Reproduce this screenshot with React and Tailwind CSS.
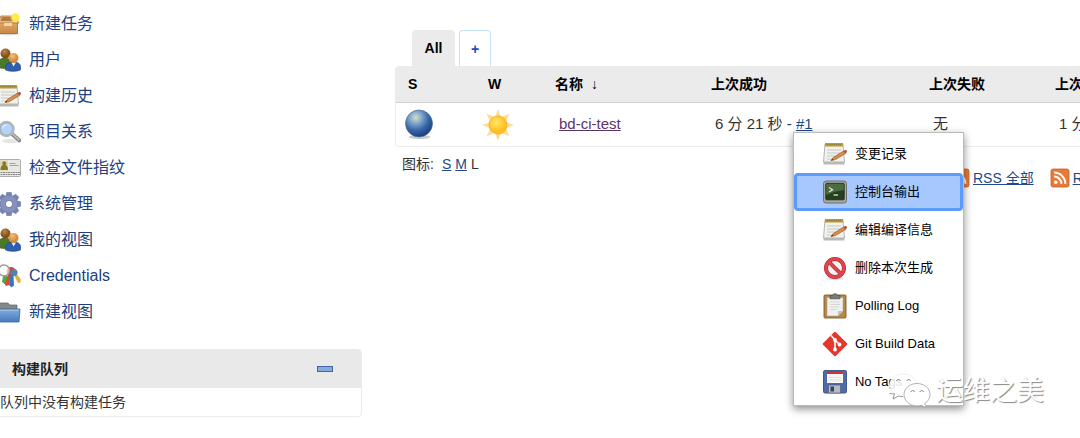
import React from "react";

const PackageIcon = () => (
  <svg viewBox="0 0 24 24" className="h-6 w-6 shrink-0">
    <defs>
      <linearGradient id="box" x1="0" y1="0" x2="0" y2="1">
        <stop offset="0" stopColor="#e0a866" />
        <stop offset="1" stopColor="#c88743" />
      </linearGradient>
      <radialGradient id="spark">
        <stop offset="0" stopColor="#fff04a" />
        <stop offset="0.6" stopColor="#fde94d" />
        <stop offset="1" stopColor="#fff6a8" stopOpacity="0" />
      </radialGradient>
    </defs>
    <ellipse cx="11" cy="22" rx="11" ry="1.500" fill="#000" opacity="0.15" />
    <path d="M1.500 10.500h19v11h-19z" fill="url(#box)" stroke="#a0682f" strokeWidth="0.8" />
    <path d="M4 4h14.500l3.500 7H.500z" fill="#e9bb80" stroke="#a8713a" strokeWidth="0.8" />
    <path d="M5 5h12.500l2 4H3.500z" fill="#b57a40" />
    <path d="M7 11h8v3H7z" fill="#f1d5aa" />
    <circle cx="18.500" cy="5.500" r="5.500" fill="url(#spark)" />
  </svg>
);

const PeopleIcon = () => (
  <svg viewBox="0 0 24 24" className="h-6 w-6 shrink-0">
    <defs>
      <radialGradient id="headBack" cx="0.4" cy="0.3">
        <stop offset="0" stopColor="#c08648" />
        <stop offset="1" stopColor="#85501f" />
      </radialGradient>
      <radialGradient id="headFront" cx="0.4" cy="0.3">
        <stop offset="0" stopColor="#f6bf7c" />
        <stop offset="1" stopColor="#d98a35" />
      </radialGradient>
    </defs>
    <path d="M0 19c0-6 3-9 8-9s7 3 7 9c-4 2-11 2-15 0z" fill="#4a7a26" stroke="#35591a" strokeWidth="0.6" />
    <circle cx="8.500" cy="5.500" r="5" fill="url(#headBack)" />
    <path d="M8.500 22c-1-5 2-8 8-8s8 3 7 8c-4 1.800-11 1.800-15 0z" fill="#2f5fae" stroke="#1f4485" strokeWidth="0.6" />
    <path d="M14.500 14.500l2 4 2.500-4z" fill="#e6eefb" />
    <circle cx="16.500" cy="10" r="5" fill="url(#headFront)" />
  </svg>
);

const NotepadIcon = () => (
  <svg viewBox="0 0 24 24" className="h-6 w-6 shrink-0">
    <path d="M2 2h18l1.500 18H.5z" fill="#f1f1ee" stroke="#a5a59f" strokeWidth="0.8" />
    <path d="M.5 20h21v2.500H.5z" fill="#b9b9b3" />
    <path d="M2 1h18v3.500H2z" fill="#b29a3e" />
    <path d="M4 2.500h14" stroke="#84702a" strokeWidth="0.8" strokeDasharray="1.200 1" />
    <path d="M4 8h14M4 11h13M4 14h8M4 17h6" stroke="#c4c4c0" strokeWidth="0.9" />
    <path d="M8 18.500l2.500-3.200 10-6.300 2 2.600-10.500 6.200z" fill="#d98b4a" stroke="#925523" strokeWidth="0.6" />
    <path d="M20.500 9l1.500-1c1.500-.4 2.600 1.300 1.500 2.500l-1 1.100z" fill="#c4453c" />
    <path d="M8 18.500l1.300-1.700 1 1.300z" fill="#333" />
  </svg>
);

const SearchIcon = () => (
  <svg viewBox="0 0 24 24" className="h-6 w-6 shrink-0">
    <ellipse cx="14" cy="21" rx="9" ry="2" fill="#000" opacity="0.1" />
    <path d="M15 14l7.500 6.500" stroke="#8b8d8b" strokeWidth="3.800" strokeLinecap="round" />
    <path d="M16 14.500l6 5.200" stroke="#c6c8c6" strokeWidth="1.200" strokeLinecap="round" />
    <circle cx="9.500" cy="9" r="7.200" fill="#b5d3f5" stroke="#b8bab6" strokeWidth="2.200" />
    <circle cx="9.500" cy="9" r="6" fill="none" stroke="#7c9fce" strokeWidth="0.6" />
    <path d="M5 8.500c0-3 3-4.500 6-4-2 1-4.500 2-6 4z" fill="#e9f3ff" />
  </svg>
);

const FingerprintIcon = () => (
  <svg viewBox="0 0 24 24" className="h-6 w-6 shrink-0">
    <rect x="0.5" y="3.500" width="23" height="17" rx="1" fill="#e7e7e4" stroke="#a7a7a2" strokeWidth="0.9" />
    <path d="M1 4.500h10v10H1z" fill="#d9d6bd" />
    <path d="M3.500 14c0-3 1-4.500 2.500-5a2 2 0 1 1 2.500 0c1.500.6 2.500 2 2.500 5z" fill="#8b7a1d" />
    <path d="M12.500 7.500h6M12.500 9.500h9" stroke="#a2a29f" strokeWidth="1" />
    <path d="M1 16.500h22M1 18.500h22" stroke="#8a8a86" strokeWidth="1" strokeDasharray="2 0.5" />
  </svg>
);

const GearIcon = () => (
  <svg viewBox="0 0 24 24" className="h-6 w-6 shrink-0">
    <g fill="#7784b3" stroke="#68749f" strokeWidth="0.5">
      {[0, 45, 90, 135].map((angle) => (
        <path key={angle} d="M9.800 0.300h4.400l1 4v15.400l-1 4H9.800l-1-4V4.300z" transform={`rotate(${angle} 12 12)`} />
      ))}
    </g>
    <circle cx="12" cy="12" r="8.300" fill="#8691bd" />
    <circle cx="12" cy="12" r="3.600" fill="#fff" stroke="#616d9a" strokeWidth="0.8" />
  </svg>
);

const KeysIcon = () => (
  <svg viewBox="0 0 24 24" className="h-6 w-6 shrink-0">
    <path d="M12 9l-5 10 2 3 3-1 2-11z" fill="#d64b3a" />
    <path d="M6 12l-1 6 3 2 3-8z" fill="#58a53c" />
    <path d="M13 9l-1 12 2.500 2.500 2.500-2-.5-11z" fill="#3c78b8" />
    <path d="M16 9l5 10 2.500-.5.300-3-5-7z" fill="#e0b13e" />
    <circle cx="14" cy="7.500" r="4.500" fill="#cc4539" />
    <circle cx="17" cy="8.500" r="3.500" fill="#4d84b5" />
    <circle cx="7" cy="6.500" r="5.500" fill="#fff" fillOpacity="0.7" stroke="#9c9e9c" strokeWidth="1.500" />
  </svg>
);

const FolderIcon = () => (
  <svg viewBox="0 0 24 24" className="h-6 w-6 shrink-0">
    <defs>
      <linearGradient id="folder" x1="0" y1="0" x2="0" y2="1">
        <stop offset="0" stopColor="#82abdc" />
        <stop offset="1" stopColor="#477cbf" />
      </linearGradient>
    </defs>
    <path d="M1 3h10l1.500 2H20v8H1z" fill="#84888a" stroke="#5d6162" strokeWidth="0.7" />
    <path d="M0 9h23l-1 13H0z" fill="url(#folder)" stroke="#34639f" strokeWidth="0.8" />
    <path d="M1 10.200h20.500" stroke="#b3cff0" strokeWidth="0.8" />
  </svg>
);

const BallIcon = () => (
  <svg viewBox="0 0 32 32" className="h-8 w-8">
    <defs>
      <radialGradient id="ball" cx="0.38" cy="0.28" r="0.72">
        <stop offset="0" stopColor="#d2dfcd" />
        <stop offset="0.3" stopColor="#85a9cb" />
        <stop offset="0.65" stopColor="#3868a9" />
        <stop offset="1" stopColor="#1d3e79" />
      </radialGradient>
    </defs>
    <ellipse cx="15.500" cy="28" rx="11" ry="2" fill="#000" opacity="0.2" />
    <circle cx="15" cy="14.500" r="13.500" fill="url(#ball)" stroke="#49709f" strokeWidth="0.7" />
  </svg>
);

const SunIcon = () => (
  <svg viewBox="0 0 32 32" className="h-8 w-8">
    <defs>
      <radialGradient id="sun" cx="0.4" cy="0.35">
        <stop offset="0" stopColor="#ffe96b" />
        <stop offset="1" stopColor="#ffc022" />
      </radialGradient>
    </defs>
    <path
      d="M16 0l3 8.300 8.300-3.600-3.600 8.300L32 16l-8.300 3 3.600 8.300-8.300-3.600L16 32l-3-8.300-8.300 3.600 3.600-8.300L0 16l8.300-3-3.600-8.300 8.300 3.600z"
      fill="#ffdc91"
    />
    <circle cx="16" cy="16" r="9" fill="url(#sun)" stroke="#f6ae2d" strokeWidth="0.9" />
  </svg>
);

const RssIcon = () => (
  <svg viewBox="0 0 20 20" className="h-5 w-5 shrink-0">
    <rect x="1" y="1" width="18" height="18" rx="2" fill="#e77a37" stroke="#c9602a" strokeWidth="0.8" />
    <circle cx="5.800" cy="14.300" r="1.800" fill="#fff" />
    <path d="M4.200 8.600a7.200 7.200 0 0 1 7.200 7.200M4.200 4.600a11.200 11.200 0 0 1 11.200 11.200" fill="none" stroke="#fff" strokeWidth="2" />
  </svg>
);

const TerminalIcon = () => (
  <svg viewBox="0 0 24 24" className="h-6 w-6 shrink-0">
    <rect x="0.5" y="1" width="23" height="22" rx="2.500" fill="#a6a9a2" stroke="#6f716c" />
    <rect x="2.800" y="3.300" width="18.400" height="16.500" rx="0.800" fill="#26401f" stroke="#172614" strokeWidth="0.8" />
    <path d="M3.200 3.700h17.600v6.500c-6 .5-12 2-17.600 4.800z" fill="#4d6b41" />
    <path d="M6 7.500l3.500 2.200L6 12" fill="none" stroke="#d7e8cf" strokeWidth="1.300" />
    <path d="M10.500 15h4.500" stroke="#d7e8cf" strokeWidth="1.300" />
  </svg>
);

const StopIcon = () => (
  <svg viewBox="0 0 24 24" className="h-6 w-6 shrink-0">
    <ellipse cx="12" cy="22.500" rx="9" ry="1.500" fill="#000" opacity="0.12" />
    <circle cx="12" cy="12" r="9" fill="#f7f1f1" stroke="#b32730" strokeWidth="4" />
    <path d="M5.800 5.800l12.400 12.400" stroke="#b32730" strokeWidth="3.800" />
    <circle cx="12" cy="12" r="9" fill="none" stroke="#db454d" strokeWidth="3" />
    <path d="M5.800 5.800l12.400 12.400" stroke="#db454d" strokeWidth="2.800" />
  </svg>
);

const ClipboardIcon = () => (
  <svg viewBox="0 0 24 26" className="h-[26px] w-6 shrink-0">
    <rect x="1" y="2" width="22" height="23" rx="1" fill="#b98748" stroke="#80592a" strokeWidth="0.9" />
    <path d="M4 4.500h16v13.500l-5 5H4z" fill="#f0f0ee" stroke="#a2a29d" strokeWidth="0.6" />
    <path d="M15 23v-5h5z" fill="#c3c3bf" />
    <path d="M7 9h10M7 11.500h10M7 14h9M7 16.500h7" stroke="#d6d6d2" strokeWidth="0.9" />
    <path d="M7 2.500h2.500C10 .3 14 .3 14.500 2.500H17v3.300H7z" fill="#777b77" stroke="#4c4f4c" strokeWidth="0.7" />
  </svg>
);

const GitIcon = () => (
  <svg viewBox="0 0 26 26" className="-mx-px h-[26px] w-[26px] shrink-0">
    <rect x="4" y="4" width="18" height="18" rx="1" transform="rotate(45 13 13)" fill="#e5382d" />
    <path d="M9 4.500l4 4.500v9.500M13 9l4.500 4.500" fill="none" stroke="#fff" strokeWidth="1.600" />
    <circle cx="13" cy="9" r="1.900" fill="#fff" />
    <circle cx="17.500" cy="13.500" r="1.900" fill="#fff" />
    <circle cx="13" cy="18.500" r="1.900" fill="#fff" />
  </svg>
);

const FloppyIcon = () => (
  <svg viewBox="0 0 24 24" className="h-6 w-6 shrink-0">
    <rect x="0.500" y="0.500" width="23" height="22.500" rx="1.500" fill="#4f6ca8" stroke="#41598c" />
    <path d="M4 1h16v12H4z" fill="#f6f6f6" />
    <path d="M4 1h16v3H4z" fill="#cf3335" />
    <path d="M6 7.500h12M6 10h12" stroke="#dcdcdc" strokeWidth="0.8" />
    <path d="M5.500 15h12v8h-12z" fill="#b6bac1" stroke="#4b5873" strokeWidth="0.6" />
    <path d="M7.500 16.500H11v5H7.500z" fill="#35466b" />
  </svg>
);

const ChatLogo = () => (
  <svg viewBox="0 0 44 38" className="h-[38px] w-11 shrink-0">
    <path
      d="M15 2C7 2 1.500 7 1.500 13c0 3.700 2 6.500 5 8.600L5 27l5.500-3c1.500.4 3 .6 4.500.6h14V13C29 7 23 2 15 2z"
      fill="#fff"
      fillOpacity="0.88"
      stroke="#dedede"
      strokeWidth="0.5"
    />
    <path d="M1.500 21.500c2 0 4 .6 5 .1L5 27l5.500-3c1.500.4 3 .6 4.500.6" fill="none" stroke="#909090" strokeWidth="0.9" />
    <path
      d="M29 11.500c-7 0-13 4.700-13 11s6 11.500 13 11.500c1.700 0 3-.3 4.500-.7l4.500 2.500-1.200-4.200c3.200-2.200 5.200-5.300 5.200-9.100 0-6.300-6-11-13-11z"
      fill="#fff"
      stroke="#a0a0a0"
      strokeWidth="0.8"
    />
    <path d="M8.500 9c.5-2 3-2 3.500 0M19 9c.5-2 3-2 3.500 0M23 20c.5-2 3-2 3.500 0M32 20c.5-2 3-2 3.500 0" fill="none" stroke="#777" strokeWidth="1" />
  </svg>
);

const tasks = [
  { label: "新建任务", icon: <PackageIcon /> },
  { label: "用户", icon: <PeopleIcon /> },
  { label: "构建历史", icon: <NotepadIcon /> },
  { label: "项目关系", icon: <SearchIcon /> },
  { label: "检查文件指纹", icon: <FingerprintIcon /> },
  { label: "系统管理", icon: <GearIcon /> },
  { label: "我的视图", icon: <PeopleIcon /> },
  { label: "Credentials", icon: <KeysIcon /> },
  { label: "新建视图", icon: <FolderIcon /> },
];

const menuItems = [
  { label: "变更记录", icon: <NotepadIcon /> },
  { label: "控制台输出", icon: <TerminalIcon />, active: true },
  { label: "编辑编译信息", icon: <NotepadIcon /> },
  { label: "删除本次生成", icon: <StopIcon /> },
  { label: "Polling Log", icon: <ClipboardIcon /> },
  { label: "Git Build Data", icon: <GitIcon /> },
  { label: "No Tags", icon: <FloppyIcon /> },
];

const BuildMenu = () => (
  <ul className="absolute top-full -left-[3px] z-10 w-[171px] border border-[#bbb] bg-white pt-0.5 pb-1 text-[13px] text-black shadow-[0_3px_8px_rgba(0,0,0,0.45)]">
    {menuItems.map((item) => (
      <li key={item.label}>
        <a
          href="#"
          className={
            item.active
              ? "flex h-[38px] items-center gap-2 rounded-sm border-3 border-[#5c9bfc] bg-[#a6c8ff] pl-[26px]"
              : "flex h-[38px] items-center gap-2 border-3 border-transparent pl-[26px]"
          }
        >
          {item.icon}
          {item.label}
        </a>
      </li>
    ))}
  </ul>
);

const Sidebar = () => (
  <aside className="w-[362px] shrink-0 pt-1.5">
    <nav className="-ml-[3px]">
      {tasks.map((task) => (
        <a key={task.label} href="#" className="flex h-9 items-center gap-2 text-base text-[#204080]">
          {task.icon}
          {task.label}
        </a>
      ))}
    </nav>
    <section className="mt-[19px] rounded-r-sm border-r border-b border-[#ebebeb]">
      <div className="flex h-[39px] items-center justify-between rounded-tr-sm bg-[#e9e9e9] pr-7 pl-3">
        <h2 className="text-sm font-bold text-[#222]">构建队列</h2>
        <button type="button" aria-label="折叠" className="flex h-5 w-4 items-center">
          <span className="h-[6px] w-full border border-[#3f66a5] bg-[#84abe0]"></span>
        </button>
      </div>
      <p className="h-7 text-sm leading-7 text-[#333]">队列中没有构建任务</p>
    </section>
  </aside>
);

const App = () => {
  return (
    <div className="relative flex min-h-screen overflow-hidden bg-white font-['Liberation_Sans','Noto_Sans_CJK_SC',sans-serif] text-[#333]">
      <Sidebar />

      <main className="min-w-0 flex-1 pt-[30px] pl-[33px]">
        {/* View tabs */}
        <div className="flex gap-1 pl-[17px] text-sm font-bold">
          <a href="#" className="flex h-9 w-[43px] items-center justify-center rounded-t-sm bg-[#ebebeb] text-black">
            All
          </a>
          <a
            href="#"
            className="flex h-9 w-8 items-center justify-center rounded-t-sm border border-b-0 border-[#c4e2fb] text-[#1b4fc0]"
          >
            +
          </a>
        </div>

        {/* Project list */}
        <table className="w-[807px] table-fixed border-separate border-spacing-0 rounded-sm border-b border-l border-[#ebebeb] text-left">
          <thead>
            <tr className="h-[37px] bg-[#ebebeb] text-sm text-black">
              <th className="w-20 rounded-tl-sm border-b border-[#d0d0d0] pl-3">S</th>
              <th className="w-[67px] border-b border-[#d0d0d0] pl-3">W</th>
              <th className="w-[156px] border-b border-[#d0d0d0] pl-3">
                名称 <span className="ml-1 font-normal">↓</span>
              </th>
              <th className="w-[218px] border-b border-[#d0d0d0] pl-3">上次成功</th>
              <th className="w-[126px] border-b border-[#d0d0d0] pl-3">上次失败</th>
              <th className="border-b border-[#d0d0d0] pl-3">上次持续时间</th>
            </tr>
          </thead>
          <tbody>
            <tr className="h-[43px] text-[15px]">
              <td className="pl-2">
                <BallIcon />
              </td>
              <td className="pl-1.5">
                <SunIcon />
              </td>
              <td className="pl-4">
                <a href="#" className="text-[#5c3566] underline">
                  bd-ci-test
                </a>
              </td>
              <td className="pl-4 whitespace-nowrap">
                6 分 21 秒 -{" "}
                <span className="relative inline-block leading-4">
                  <a href="#" className="text-[#204a87] underline">
                    #1
                  </a>
                  <BuildMenu />
                </span>
              </td>
              <td className="pl-4">无</td>
              <td className="pl-4">1 分 38 秒</td>
            </tr>
          </tbody>
        </table>

        {/* Icon size and feeds */}
        <div className="flex items-start text-sm whitespace-nowrap">
          <div className="flex w-[555px] shrink-0 gap-1 pt-[7px] pl-[7px]">
            <span className="mr-1">图标:</span>
            <a href="#" className="text-[#204a87] underline">
              S
            </a>
            <a href="#" className="text-[#204a87] underline">
              M
            </a>
            <span>L</span>
          </div>
          <div className="flex gap-4 pt-[21px]">
            <a href="#" className="flex items-center gap-[3px] text-[#204a87] underline">
              <RssIcon />
              RSS 全部
            </a>
            <a href="#" className="flex items-center gap-[3px] text-[#204a87] underline">
              <RssIcon />
              RSS 失败
            </a>
          </div>
        </div>
      </main>

      {/* Watermark */}
      <div className="pointer-events-none absolute right-9 bottom-[28px] z-20 flex items-center gap-1">
        <ChatLogo />
        <span className="text-[27px] leading-9 text-white [text-shadow:1px_1px_1px_#888]">运维之美</span>
      </div>
    </div>
  );
};

export default App;
